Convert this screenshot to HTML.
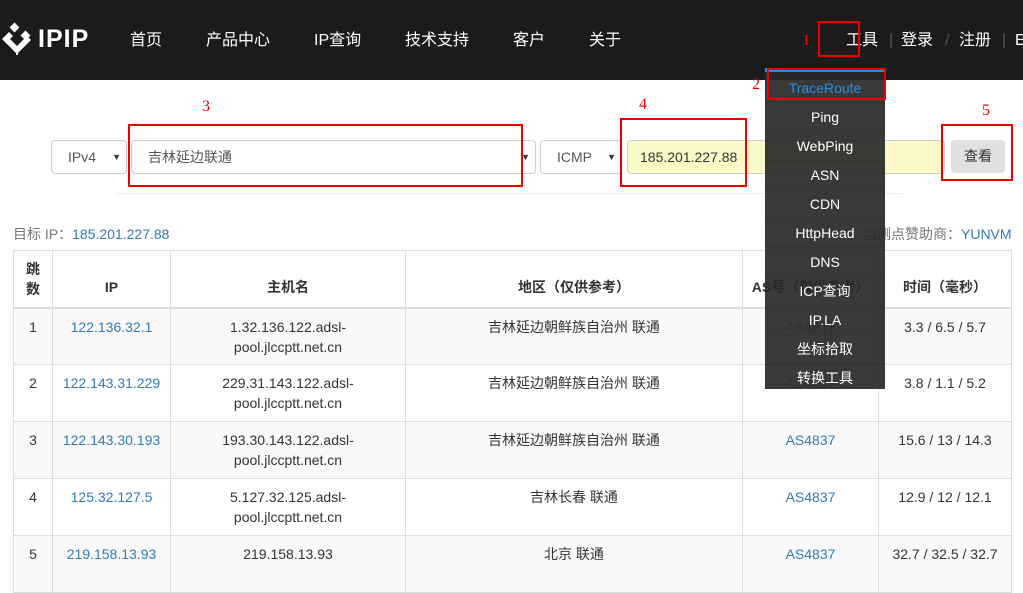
<!DOCTYPE html>
<html><head><meta charset="utf-8"><style>
*{margin:0;padding:0;box-sizing:border-box}
body{width:1023px;height:568px;overflow:hidden;background:#fff;font-family:"Liberation Sans","Noto Sans CJK SC",sans-serif;font-size:14px;color:#333;position:relative}
.nav{position:absolute;left:0;top:0;width:1023px;height:80px;background:#1b1b1b}
.nav span{position:absolute;top:31px;color:#fff;font-size:16px;line-height:20px}
.logo{position:absolute;left:38px;top:25px;color:#fff;font-weight:bold;font-size:25px;letter-spacing:1px}
.sep{color:#555!important}
.ab{position:absolute}
.red{position:absolute;border:2px solid #e00}
.num{position:absolute;color:#e00;font-family:"Liberation Serif",serif;font-size:16px}
.sel{position:absolute;top:140px;height:34px;border:1px solid #ccc;border-radius:4px;background:#fff;line-height:32px;padding-left:16px;font-size:14px;color:#555}
.arr{position:absolute;right:5px;top:0;font-size:9px;color:#333}
table{position:absolute;left:13px;top:250px;border-collapse:collapse;width:999px}
td,th{border:1px solid #ddd;text-align:center;font-size:14px;line-height:20px}
th{height:57px;vertical-align:bottom;padding-bottom:10px;font-weight:bold;border-bottom:2px solid #ddd}
td{height:57px;vertical-align:top;padding-top:8px}
tr.o td{background:#f9f9f9}
a{color:#337ab7;text-decoration:none}
.dd{position:absolute;left:765px;top:68px;width:120px;height:321px;background:rgba(40,40,40,.92);border-top:4px solid #1e90e8;padding-top:2px}
.dd div{height:29px;line-height:29px;text-align:center;color:#fff;font-size:14px;border-bottom:1px solid #333}
</style></head><body>
<div class="nav">
<svg class="ab" style="left:0;top:22px" width="36" height="36" viewBox="0 0 36 36"><g fill="#fff"><rect x="11" y="2" width="7" height="7" transform="rotate(45 14.5 5.5)"/><path d="M2 17 L9 10 L13 14 L10 17 L17 24 L27 14 L31 18 L17 32 Z"/><rect x="22" y="10" width="7" height="7" transform="rotate(45 25.5 13.5)"/><rect x="16" y="31" width="2" height="2"/></g></svg>
<div class="logo">IPIP</div>
<span style="left:130px">首页</span><span style="left:206px">产品中心</span><span style="left:314px">IP查询</span><span style="left:405px">技术支持</span><span style="left:513px">客户</span><span style="left:589px">关于</span>
<span style="left:846px">工具</span><span class="sep" style="left:889px">|</span><span style="left:901px">登录</span><span class="sep" style="left:945px">/</span><span style="left:959px">注册</span><span class="sep" style="left:1002px">|</span><span style="left:1015px">E</span>
</div>
<div class="sel" style="left:51px;width:76px">IPv4<span class="arr">▼</span></div>
<div class="sel" style="left:131px;width:405px">吉林延边联通<span class="arr">▼</span></div>
<div class="sel" style="left:540px;width:82px">ICMP<span class="arr">▼</span></div>
<div class="sel" style="left:627px;width:318px;background:#fafac8;color:#333;padding-left:12px">185.201.227.88</div>
<div class="ab" style="left:951px;top:140px;width:54px;height:33px;background:#e0e0e0;border-radius:4px;text-align:center;line-height:33px;color:#333">查看</div>
<div class="ab" style="left:117px;top:193px;width:785px;height:1px;background:#eee"></div>
<div class="ab" style="left:13px;top:224px;color:#777">目标 IP：<a>185.201.227.88</a></div>
<div class="ab" style="left:863px;top:224px;color:#777">监测点赞助商：<a>YUNVM</a></div>
<table>
<tr><th style="width:39px;vertical-align:middle;padding:0">跳<br>数</th><th style="width:118px">IP</th><th style="width:235px">主机名</th><th style="width:337px">地区（仅供参考）</th><th style="width:136px">AS号（仅供参考）</th><th>时间（毫秒）</th></tr>
<tr class="o"><td>1</td><td><a>122.136.32.1</a></td><td>1.32.136.122.adsl-<br>pool.jlccptt.net.cn</td><td>吉林延边朝鲜族自治州 联通</td><td><a>AS4837</a></td><td>3.3 / 6.5 / 5.7</td></tr>
<tr><td>2</td><td><a>122.143.31.229</a></td><td>229.31.143.122.adsl-<br>pool.jlccptt.net.cn</td><td>吉林延边朝鲜族自治州 联通</td><td><a>AS4837</a></td><td>3.8 / 1.1 / 5.2</td></tr>
<tr class="o"><td>3</td><td><a>122.143.30.193</a></td><td>193.30.143.122.adsl-<br>pool.jlccptt.net.cn</td><td>吉林延边朝鲜族自治州 联通</td><td><a>AS4837</a></td><td>15.6 / 13 / 14.3</td></tr>
<tr><td>4</td><td><a>125.32.127.5</a></td><td>5.127.32.125.adsl-<br>pool.jlccptt.net.cn</td><td>吉林长春 联通</td><td><a>AS4837</a></td><td>12.9 / 12 / 12.1</td></tr>
<tr class="o"><td>5</td><td><a>219.158.13.93</a></td><td>219.158.13.93</td><td>北京 联通</td><td><a>AS4837</a></td><td>32.7 / 32.5 / 32.7</td></tr>
</table>
<div class="dd">
<div style="color:#2a8ee0">TraceRoute</div><div>Ping</div><div>WebPing</div><div>ASN</div><div>CDN</div><div>HttpHead</div><div>DNS</div><div>ICP查询</div><div>IP.LA</div><div>坐标拾取</div><div style="border:0">转换工具</div>
</div>
<div class="red" style="left:818px;top:21px;width:42px;height:36px"></div>
<div class="red" style="left:767px;top:68px;width:119px;height:32px"></div>
<div class="red" style="left:128px;top:124px;width:395px;height:63px"></div>
<div class="red" style="left:620px;top:118px;width:127px;height:69px"></div>
<div class="red" style="left:941px;top:124px;width:72px;height:57px"></div>
<div class="num" style="left:802px;top:32px">1</div>
<div class="num" style="left:752px;top:76px">2</div>
<div class="num" style="left:202px;top:98px">3</div>
<div class="num" style="left:639px;top:96px">4</div>
<div class="num" style="left:982px;top:102px">5</div>
</body></html>
